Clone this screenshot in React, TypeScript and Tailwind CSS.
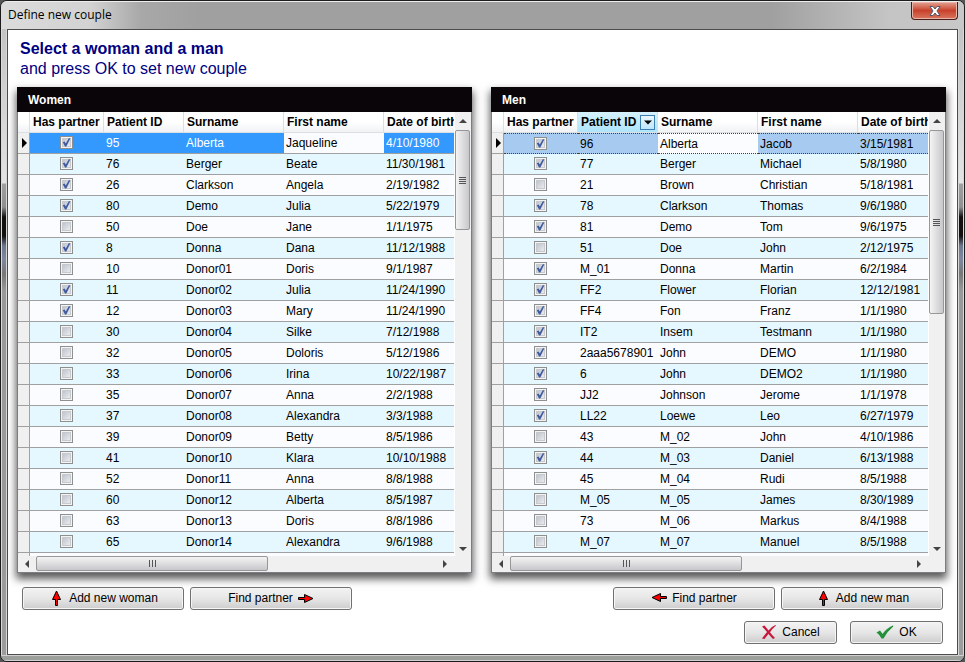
import React, { useState } from "react";
import clsx from "clsx";

type Person = [boolean, string, string, string, string];

const WOMEN: Person[] = [
  [true, "95", "Alberta", "Jaqueline", "4/10/1980"],
  [true, "76", "Berger", "Beate", "11/30/1981"],
  [true, "26", "Clarkson", "Angela", "2/19/1982"],
  [true, "80", "Demo", "Julia", "5/22/1979"],
  [false, "50", "Doe", "Jane", "1/1/1975"],
  [true, "8", "Donna", "Dana", "11/12/1988"],
  [false, "10", "Donor01", "Doris", "9/1/1987"],
  [true, "11", "Donor02", "Julia", "11/24/1990"],
  [true, "12", "Donor03", "Mary", "11/24/1990"],
  [false, "30", "Donor04", "Silke", "7/12/1988"],
  [false, "32", "Donor05", "Doloris", "5/12/1986"],
  [false, "33", "Donor06", "Irina", "10/22/1987"],
  [false, "35", "Donor07", "Anna", "2/2/1988"],
  [false, "37", "Donor08", "Alexandra", "3/3/1988"],
  [false, "39", "Donor09", "Betty", "8/5/1986"],
  [false, "41", "Donor10", "Klara", "10/10/1988"],
  [false, "52", "Donor11", "Anna", "8/8/1988"],
  [false, "60", "Donor12", "Alberta", "8/5/1987"],
  [false, "63", "Donor13", "Doris", "8/8/1986"],
  [false, "65", "Donor14", "Alexandra", "9/6/1988"],
];

const MEN: Person[] = [
  [true, "96", "Alberta", "Jacob", "3/15/1981"],
  [true, "77", "Berger", "Michael", "5/8/1980"],
  [false, "21", "Brown", "Christian", "5/18/1981"],
  [true, "78", "Clarkson", "Thomas", "9/6/1980"],
  [true, "81", "Demo", "Tom", "9/6/1975"],
  [false, "51", "Doe", "John", "2/12/1975"],
  [true, "M_01", "Donna", "Martin", "6/2/1984"],
  [true, "FF2", "Flower", "Florian", "12/12/1981"],
  [true, "FF4", "Fon", "Franz", "1/1/1980"],
  [true, "IT2", "Insem", "Testmann", "1/1/1980"],
  [true, "2aaa5678901", "John", "DEMO", "1/1/1980"],
  [true, "6", "John", "DEMO2", "1/1/1980"],
  [true, "JJ2", "Johnson", "Jerome", "1/1/1978"],
  [true, "LL22", "Loewe", "Leo", "6/27/1979"],
  [false, "43", "M_02", "John", "4/10/1986"],
  [true, "44", "M_03", "Daniel", "6/13/1988"],
  [false, "45", "M_04", "Rudi", "8/5/1988"],
  [false, "M_05", "M_05", "James", "8/30/1989"],
  [false, "73", "M_06", "Markus", "8/4/1988"],
  [false, "M_07", "M_07", "Manuel", "8/5/1988"],
];

const PartnerCheck: React.FC<{ label: string; initial: boolean }> = ({
  label,
  initial,
}) => {
  const [checked, setChecked] = useState(initial);
  return (
    <label className="grid w-[13px] h-[13px] mx-auto">
      <input
        type="checkbox"
        aria-label={label}
        checked={checked}
        onChange={() => setChecked(!checked)}
        className="col-start-1 row-start-1 appearance-none w-[13px] h-[13px] border border-[#8e8f8f] bg-linear-to-br from-[#b4bac6] to-[#f6f6f6] shadow-[inset_0_0_0_1px_#f4f4f4,inset_0_0_0_2px_#c6c9ce]"
      />
      {checked && (
        <svg
          viewBox="0 0 13 13"
          className="col-start-1 row-start-1 w-[13px] h-[13px] pointer-events-none"
        >
          <path
            d="M2.800 6.200 4.600 5.600 5.800 7.600 8.800 2.200 10.400 2.200 6.300 10.600 5 10.600Z"
            fill="#3f5a9e"
          />
        </svg>
      )}
    </label>
  );
};

const Arrow: React.FC<{ dir: "up" | "left" | "right" }> = ({ dir }) => (
  <svg
    viewBox="0 0 16 16"
    className={clsx(
      "w-4 h-4 shrink-0",
      dir === "left" && "-rotate-90",
      dir === "right" && "rotate-90"
    )}
  >
    <path
      d="M8.500 1 12.500 9.500H9.500V15.500H7.500V9.500H4.500Z"
      fill="#f00"
      stroke="#000"
      strokeWidth="1"
    />
  </svg>
);

const ScrollArrow: React.FC<{ d: string; label: string; className: string }> = ({
  d,
  label,
  className,
}) => (
  <button
    type="button"
    aria-label={label}
    className={clsx("flex items-center justify-center shrink-0", className)}
  >
    <svg viewBox="0 0 8 8" className="w-2 h-2">
      <path d={d} fill="#444" />
    </svg>
  </button>
);

const Button: React.FC<{ className: string; children: React.ReactNode }> = ({
  className,
  children,
}) => (
  <button
    type="button"
    className={clsx(
      "h-[23px] pb-[2px] flex items-center justify-center gap-[5px] rounded-[3px] border border-[#707070] bg-linear-to-b from-[#f3f3f3] via-[#e6e6e6] via-50% to-[#cdcdcd] shadow-[inset_0_0_0_1px_#f6f6f6]",
      className
    )}
  >
    {children}
  </button>
);

const HEAD =
  "h-[21px] p-0 pl-[3px] text-left font-bold leading-5 whitespace-nowrap border-r border-b border-[#dcdfe2]";
const HEAD_BG = "bg-linear-to-b from-white from-50% to-[#f1f2f4]";

const PatientGrid: React.FC<{
  title: string;
  people: Person[];
  active: boolean;
  sorted?: boolean;
  editCol: number;
  thumb: string;
}> = ({ title, people, active, sorted, editCol, thumb }) => {
  const selected = active ? "bg-[#3399ff] text-white" : "bg-[#a6caf0]";
  return (
    <section className="min-w-0 border border-t-0 border-[#7c7c84] bg-white shadow-[0_5px_8px_1px_rgba(0,0,0,0.65)]">
      <h2 className="-mx-px h-[25px] pl-[11px] bg-[#0a0508] text-white font-bold leading-[27px]">
        {title}
      </h2>
      <div className="flex">
        <div className="flex-1 min-w-0 overflow-hidden">
          <table className="w-full table-fixed border-separate border-spacing-0">
            <colgroup>
              <col className="w-3" />
              <col className="w-[74px]" />
              <col className="w-20" />
              <col className="w-[100px]" />
              <col className="w-[100px]" />
              <col />
            </colgroup>
            <thead>
              <tr>
                <th className={clsx(HEAD, HEAD_BG)}></th>
                <th className={clsx(HEAD, HEAD_BG)}>Has partner</th>
                <th
                  className={clsx(
                    HEAD,
                    sorted
                      ? "bg-linear-to-b from-[#d6f1fd] to-[#aee4fb] border-[#7fc5e2]"
                      : HEAD_BG
                  )}
                >
                  <span className="flex items-center justify-between">
                    Patient ID
                    {sorted && (
                      <button
                        type="button"
                        aria-label="Filter"
                        className="w-[15px] h-[15px] mr-[2px] flex items-center justify-center border border-[#3c7fb1] bg-linear-to-b from-[#eaf6fd] to-[#bee6fd]"
                      >
                        <svg viewBox="0 0 8 8" className="w-2 h-2">
                          <path d="M0 2.5H8L4 6.5Z" fill="#000" />
                        </svg>
                      </button>
                    )}
                  </span>
                </th>
                <th className={clsx(HEAD, HEAD_BG)}>Surname</th>
                <th className={clsx(HEAD, HEAD_BG)}>First name</th>
                <th className={clsx(HEAD, HEAD_BG, "border-r-0")}>
                  Date of birth
                </th>
              </tr>
            </thead>
            <tbody>
              {people.map(([partner, ...cells], row) => {
                const line = clsx(
                  "h-[21px] p-0 border-b",
                  row === 0 && !active
                    ? "border-t border-dotted border-[#5a3a1a]"
                    : "border-[#a0a0a0]"
                );
                return (
                  <tr
                    key={row}
                    className={row % 2 ? "bg-[#e5f7ff]" : "bg-[#fafcff]"}
                  >
                    <td className="p-0 bg-[#f0f0f0] border-r border-b border-[#a0a0a0]">
                      {row === 0 && (
                        <svg viewBox="0 0 6 10" className="w-[6px] h-[10px] ml-1">
                          <path d="M0 0 5 5 0 10Z" fill="#000" />
                        </svg>
                      )}
                    </td>
                    <td className={clsx(line, "pr-px pb-px", row === 0 && selected)}>
                      <PartnerCheck
                        label={`${cells[1]} has partner`}
                        initial={partner}
                      />
                    </td>
                    {cells.map((cell, col) => (
                      <td
                        key={col}
                        className={clsx(
                          line,
                          "pl-[2px] leading-[18px] whitespace-nowrap",
                          row === 0 && col !== editCol && selected
                        )}
                      >
                        {cell}
                      </td>
                    ))}
                  </tr>
                );
              })}
            </tbody>
          </table>
          <div className="h-[3px] bg-[#fafcff]">
            <div className="w-3 h-full bg-[#f0f0f0] border-r border-[#a0a0a0]"></div>
          </div>
        </div>
        <div className="w-[17px] shrink-0 flex flex-col bg-[#f0f0f0] border-l border-white">
          <ScrollArrow d="M0 6 4 2 8 6Z" label="Scroll up" className="h-[18px]" />
          <div
            className={clsx(
              "w-[15px] flex flex-col items-center justify-center gap-px border border-[#979797] rounded-[2px] bg-linear-to-r from-[#f4f4f4] to-[#c8c8cc]",
              thumb
            )}
          >
            <i className="w-[7px] h-px bg-[#555]"></i>
            <i className="w-[7px] h-px bg-[#555]"></i>
            <i className="w-[7px] h-px bg-[#555]"></i>
            <i className="w-[7px] h-px bg-[#555]"></i>
          </div>
          <ScrollArrow
            d="M0 2 4 6 8 2Z"
            label="Scroll down"
            className="h-[15px] mt-auto"
          />
        </div>
      </div>
      <div className="h-4 flex bg-[#f0f0f0]">
        <ScrollArrow d="M6 0 2 4 6 8Z" label="Scroll left" className="w-[18px]" />
        <div className="w-[232px] h-[15px] flex items-center justify-center gap-[2px] border border-[#979797] rounded-[2px] bg-linear-to-b from-[#f4f4f4] to-[#c8c8cc]">
          <i className="w-px h-[7px] bg-[#555]"></i>
          <i className="w-px h-[7px] bg-[#555]"></i>
          <i className="w-px h-[7px] bg-[#555]"></i>
        </div>
        <ScrollArrow
          d="M2 0 6 4 2 8Z"
          label="Scroll right"
          className="w-[18px] ml-auto mr-[17px]"
        />
      </div>
    </section>
  );
};

const SideFrame: React.FC = () => (
  <div className="w-[6px] shrink-0 border-x border-x-[#d8d8d8] bg-[linear-gradient(to_bottom,#c4c4c4_0px,#e4e4e4_154px,#a0a0a0_155px,#909090_178px,#141010_188px,#141010_207px,#6d7890_217px,#8088a0_230px,#777_245px,#999_262px,#9c9c9c_100%)]"></div>
);

const App: React.FC = () => {
  return (
    <div className="bg-[#555]">
      <main className="min-h-screen flex flex-col rounded-[7px] border border-[#1c1c1c] bg-[#a0a0a0] font-['Liberation_Sans',Arial,sans-serif] text-xs text-black overflow-hidden">
        <header className="h-7 shrink-0 flex items-start justify-between pl-[7px] pr-[6px] border-t border-[#eee] bg-[linear-gradient(to_right,#dcdcdc_0px,#d2d2d2_90px,#a8a8a8_140px,#a0a0a0_200px,#a0a0a0_80%,#c4c4c4_92%,#c8c8c8_100%)]">
          <h1 className="leading-[26px] font-['Open_Sans','Noto_Sans',sans-serif]">
            Define new couple
          </h1>
          <button
            type="button"
            aria-label="Close"
            className="w-[47px] h-[18px] flex items-center justify-center rounded-b-[4px] border border-t-0 border-[#4a1d18] bg-linear-to-b from-[#e2a193] from-0% via-[#c8402a] via-50% to-[#d9755f] shadow-[inset_0_0_0_1px_#e9b5aa]"
          >
            <svg viewBox="0 0 12 10" className="w-3 h-[10px]">
              <path
                d="M1 .5H4L6 3 8 .5H11L8 5 11 9.5H8L6 7 4 9.5H1L4 5Z"
                fill="#fff"
                stroke="#535666"
                strokeWidth="1"
              />
            </svg>
          </button>
        </header>
        <div className="flex-1 flex">
          <SideFrame />
          <div className="flex-1 min-w-0 border border-[#4c4c4c] bg-white pl-[9px] pr-[11px] pt-[9px]">
            <div className="pl-[3px] text-base text-[#000080]">
              <p className="font-bold leading-5">Select a woman and a man</p>
              <p className="leading-[19px]">and press OK to set new couple</p>
            </div>
            <div className="grid grid-cols-2 gap-x-[19px] mt-[9px]">
              <PatientGrid
                title="Women"
                people={WOMEN}
                active
                editCol={2}
                thumb="h-[100px]"
              />
              <PatientGrid
                title="Men"
                people={MEN}
                active={false}
                sorted
                editCol={1}
                thumb="h-[184px]"
              />
            </div>
            <div className="flex justify-between mt-[14px] pl-[5px] pr-[3px]">
              <div className="flex gap-[6px]">
                <Button className="w-[162px]">
                  <Arrow dir="up" />
                  Add new woman
                </Button>
                <Button className="w-[162px]">
                  Find partner
                  <Arrow dir="right" />
                </Button>
              </div>
              <div className="flex gap-[6px]">
                <Button className="w-[162px]">
                  <Arrow dir="left" />
                  Find partner
                </Button>
                <Button className="w-[162px]">
                  <Arrow dir="up" />
                  Add new man
                </Button>
              </div>
            </div>
            <div className="flex justify-end gap-[13px] mt-[11px] pr-[3px]">
              <Button className="w-[93px]">
                <svg viewBox="0 0 16 16" className="w-4 h-4">
                  <path
                    d="M1 2.5 3.5 1.5Q6 4.5 7.5 6.5 10.5 2.5 14.5 1L15 1.5Q11.500 4.500 9 8.200 11 11 14 14L12 15Q9.500 12.500 7.500 10 5 13 3.500 15L1 14.500Q3.500 11 6 8 3.500 5 1 2.500Z"
                    fill="#c8193c"
                  />
                </svg>
                Cancel
              </Button>
              <Button className="w-[93px]">
                <svg viewBox="0 0 18 14" className="w-[18px] h-[14px]">
                  <path
                    d="M.5 7.500 4 5.500Q5.500 7 6.500 9 10.500 3 17 .5L17.500 1.200Q11.500 6 7.500 13.500H5.500Q3.500 9.500 .5 7.500Z"
                    fill="#23913a"
                  />
                </svg>
                OK
              </Button>
            </div>
          </div>
          <SideFrame />
        </div>
        <div className="h-[6px] shrink-0 border-y border-[#d0d0d0] bg-[#9c9f9c]"></div>
      </main>
    </div>
  );
};

export default App;
